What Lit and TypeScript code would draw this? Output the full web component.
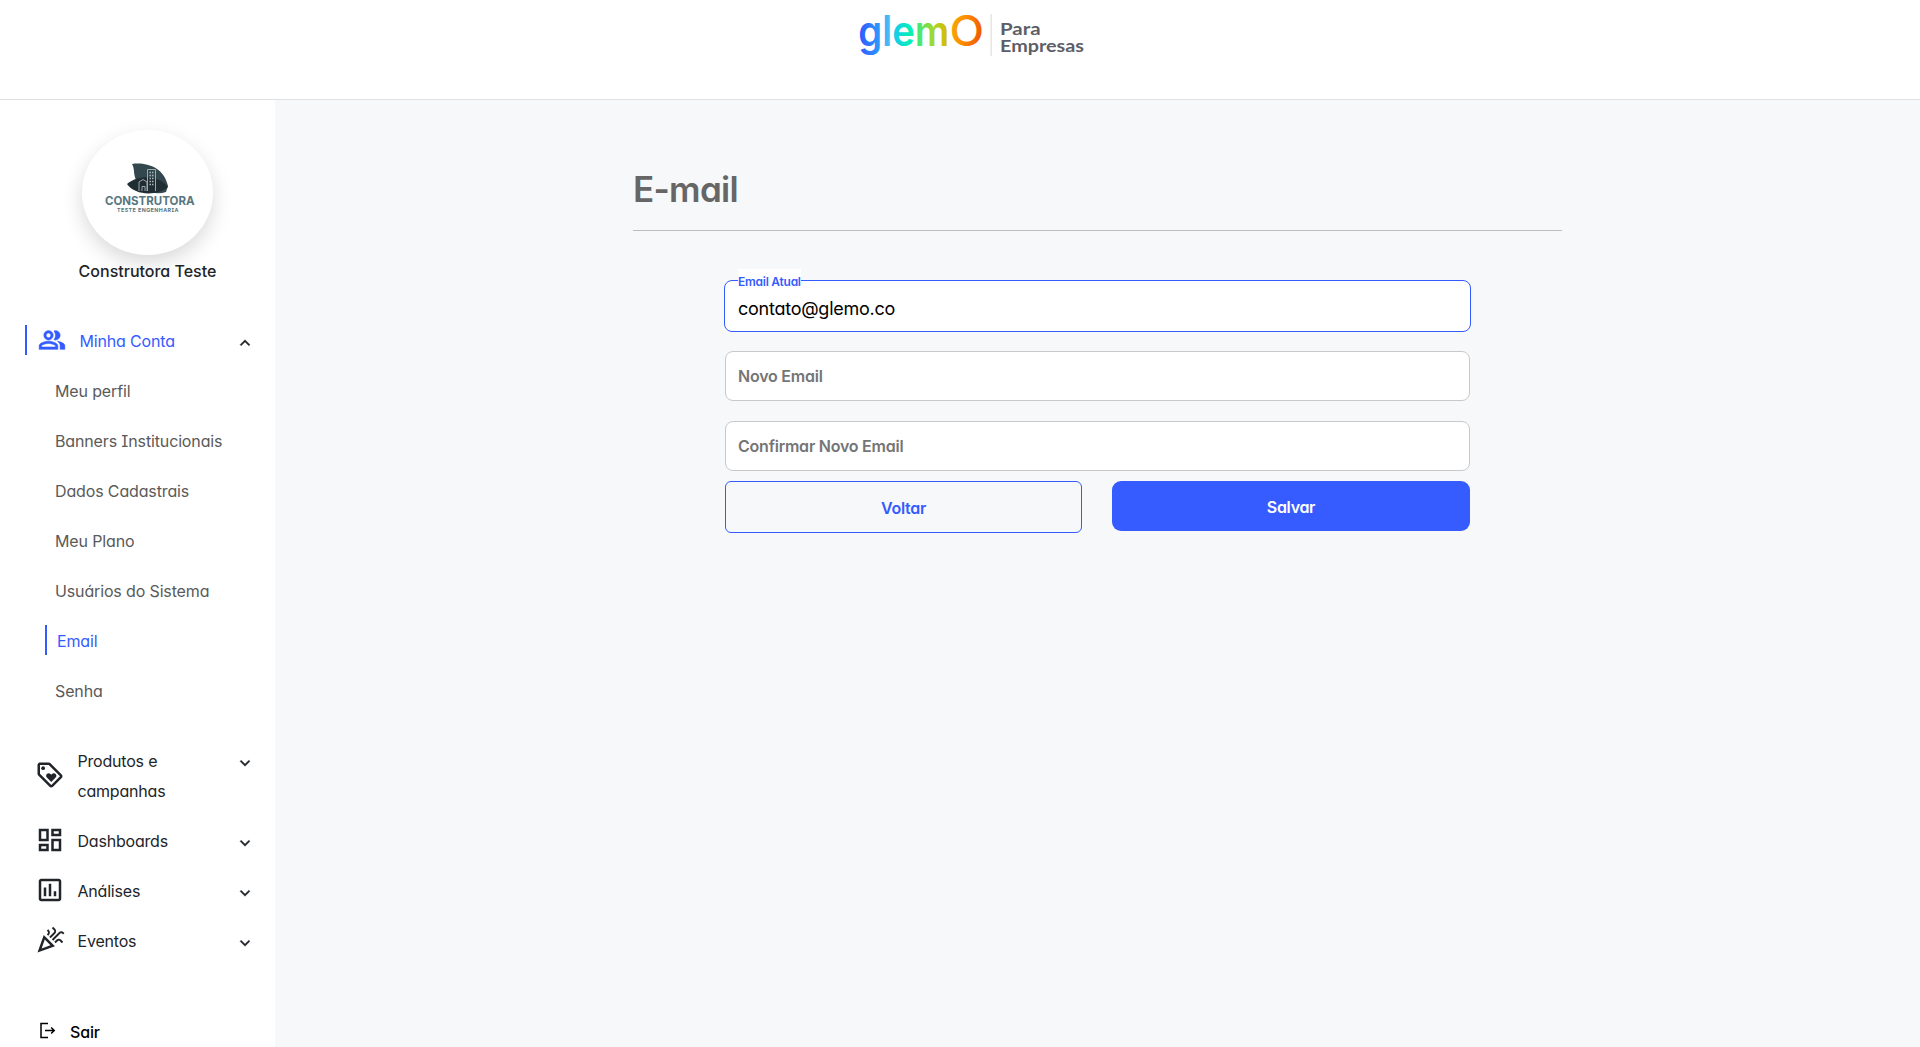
import { LitElement, html, css, svg } from "lit";
import { customElement, property } from "lit/decorators.js";
import { classMap } from "lit/directives/class-map.js";

const baseText = css`
  :host {
    box-sizing: border-box;
    font-family: Inter, "Liberation Sans", sans-serif;
    font-feature-settings: "cv11", "cv08";
    font-size: 16px;
  }
  * {
    box-sizing: border-box;
  }
  svg {
    display: block;
    flex: none;
  }
`;

const icons: Record<string, unknown> = {
  group: svg`<path stroke="currentColor" stroke-width=".5" d="M16.67 13.13C18.04 14.06 19 15.32 19 17v3h4v-3c0-2.18-3.57-3.47-6.33-3.87zM15 12c2.21 0 4-1.79 4-4s-1.79-4-4-4c-.47 0-.91.1-1.33.24C14.5 5.27 15 6.58 15 8s-.5 2.73-1.33 3.76c.42.14.86.24 1.33.24zM9 12c2.21 0 4-1.79 4-4s-1.79-4-4-4-4 1.79-4 4 1.79 4 4 4zm0-6c1.1 0 2 .9 2 2s-.9 2-2 2-2-.9-2-2 .9-2 2-2zM9 13c-2.67 0-8 1.34-8 4v3h16v-3c0-2.66-5.33-4-8-4zm6 5H3v-.99C3.2 16.29 6.3 15 9 15s5.8 1.29 6 2v1z"/>`,
  loyalty: svg`<path d="M21.41 11.58l-9-9C12.05 2.22 11.55 2 11 2H4c-1.1 0-2 .9-2 2v7c0 .55.22 1.05.59 1.42l9 9c.36.36.86.58 1.41.58s1.05-.22 1.41-.59l7-7c.37-.36.59-.86.59-1.41s-.23-1.06-.59-1.42zM13 20.01L4 11V4h7v-.01l9 9-7 7.02z"/><circle cx="6.5" cy="6.5" r="1.5"/><path d="M8.9 12.55c0 .57.23 1.07.6 1.45l3.5 3.5 3.5-3.5c.37-.37.6-.89.6-1.45 0-1.13-.92-2.05-2.05-2.05-.57 0-1.08.23-1.45.6l-.6.6-.6-.59c-.37-.38-.89-.61-1.45-.61-1.13 0-2.05.92-2.05 2.05z"/>`,
  dashboard: svg`<path d="M19 5v2h-4V5h4M9 5v6H5V5h4m10 8v6h-4v-6h4M9 17v2H5v-2h4M21 3h-8v6h8V3zM11 3H3v10h8V3zm10 8h-8v10h8V11zm-10 4H3v6h8v-6z"/>`,
  chart: svg`<path d="M9 17H7v-7h2v7zm4 0h-2V7h2v10zm4 0h-2v-4h2v4zm2 2H5V5h14v14zm0-16H5c-1.1 0-2 .9-2 2v14c0 1.1.9 2 2 2h14c1.1 0 2-.9 2-2V5c0-1.1-.9-2-2-2z"/>`,
  party: svg`<path d="M2 22l14-5-9-9L2 22zm10.35-5.82L5.3 18.7l2.52-7.05 4.53 4.53zM14.53 12.53l5.59-5.59c.49-.49 1.28-.49 1.77 0l.59.59 1.06-1.06-.59-.59c-1.07-1.07-2.82-1.07-3.89 0l-5.59 5.59 1.06 1.06zM10.06 6.88l-.59.59 1.06 1.06.59-.59c1.07-1.07 1.07-2.82 0-3.89l-.59-.59-1.06 1.07.59.59c.48.48.48 1.28 0 1.76zM17.06 11.88l-1.59 1.59 1.06 1.06 1.59-1.59c.49-.49 1.28-.49 1.77 0l1.61 1.61 1.06-1.06-1.61-1.61c-1.08-1.07-2.82-1.07-3.9 0zM15.06 5.88l-3.59 3.59 1.06 1.06 3.59-3.59c1.07-1.07 1.07-2.82 0-3.89l-1.59-1.59-1.06 1.06 1.59 1.59c.48.49.48 1.29 0 1.77z"/>`,
  more: svg`<path stroke="currentColor" stroke-width=".4" d="M16.59 8.59L12 13.17 7.41 8.59 6 10l6 6 6-6z"/>`,
  less: svg`<path stroke="currentColor" stroke-width=".4" d="M12 8l-6 6 1.41 1.41L12 10.83l4.59 4.58L18 14z"/>`,
};

const icon = (name: string, size: number) =>
  html`<svg width=${size} height=${size} viewBox="0 0 24 24" fill="currentColor">${icons[name]}</svg>`;

@customElement("brand-logo")
class BrandLogo extends LitElement {
  static styles = [
    baseText,
    css`
      :host {
        display: flex;
      }
      .word {
        font-size: 42.5px;
        font-weight: 600;
      }
      .ring {
        font-weight: 500;
      }
      .sub {
        font-family: Lato, sans-serif;
        font-size: 16.8px;
        font-weight: 700;
        fill: #5d5e67;
      }
    `,
  ];
  render() {
    return html`<svg width="230" height="60" viewBox="0 0 230 60">
      <defs>
        <linearGradient id="rainbow" gradientUnits="userSpaceOnUse" x1="2" y1="0" x2="124" y2="0">
          <stop offset="0" stop-color="#2f5bff" />
          <stop offset=".17" stop-color="#2e9dff" />
          <stop offset=".24" stop-color="#50bdf5" />
          <stop offset=".29" stop-color="#15cdea" />
          <stop offset=".42" stop-color="#05f3b0" />
          <stop offset=".47" stop-color="#3ee97c" />
          <stop offset=".6" stop-color="#a4d82a" />
          <stop offset=".72" stop-color="#dbb800" />
        </linearGradient>
        <linearGradient id="sunset" x1="0" y1="0" x2="1" y2=".25">
          <stop offset="0" stop-color="#f2b100" />
          <stop offset=".5" stop-color="#ff8e00" />
          <stop offset="1" stop-color="#f05a00" />
        </linearGradient>
      </defs>
      <text class="word" x="0.300" y="45.5" textLength="91" lengthAdjust="spacingAndGlyphs" fill="url(#rainbow)">glem</text>
      <text class="word ring" x="91.500" y="45.500" textLength="34.500" lengthAdjust="spacingAndGlyphs" fill="url(#sunset)">O</text>
      <rect x="132.5" y="14" width="1.5" height="42" fill="#e6e6e8" />
      <text class="sub">
        <tspan x="142" y="34.700" textLength="40.500" lengthAdjust="spacingAndGlyphs">Para</tspan><tspan x="142" y="51.500" textLength="84" lengthAdjust="spacingAndGlyphs">Empresas</tspan>
      </text>
    </svg>`;
  }
}

@customElement("company-card")
class CompanyCard extends LitElement {
  static styles = [
    baseText,
    css`
      :host {
        display: flex;
        flex-direction: column;
        align-items: center;
        width: 137px;
      }
      .avatar {
        width: 131px;
        height: 125px;
        border-radius: 50%;
        background: #fff;
        box-shadow: 0 8px 20px rgba(0, 0, 0, 0.15);
      }
      .name {
        padding-top: 1px;
        line-height: 30px;
        font-weight: 500;
        color: #212529;
        white-space: nowrap;
      }
      .mark {
        font-family: Inter, sans-serif;
        font-weight: 700;
        font-size: 12px;
        fill: #577681;
      }
      .small {
        font-size: 5.3px;
      }
    `,
  ];
  render() {
    return html`
      <div class="avatar">
        <svg width="131" height="125" viewBox="0 0 131 125">
          <path d="M50 34C64 32 82 37 86 56L84 62C72 66 58 60 54 50C51 43 53 39 50 34Z" fill="#33474f" />
          <path d="M45 54C55 45 76 44 86 57C76 66 53 66 45 54Z" fill="#202d33" />
          <g fill="none" stroke="#a9b4b7" stroke-width=".9">
            <path d="M65.5 61V39.5H73.5V61M57 61V52L61 49.5L65 52V61M60 61V56.5H63V61" />
            <path d="M67.5 42.5h4M67.5 45.5h4M67.5 48.5h4M67.5 51.5h4M67.5 54.5h4" stroke-dasharray="1.5 1" stroke-width="1.5" />
          </g>
          <text class="mark" x="23" y="74.5" textLength="89.500" lengthAdjust="spacingAndGlyphs">CONSTRUTORA</text>
          <text class="mark small" x="35" y="81.700" textLength="61.500">TESTE ENGENHARIA</text>
        </svg>
      </div>
      <div class="name">Construtora Teste</div>
    `;
  }
}

@customElement("nav-group")
class NavGroup extends LitElement {
  @property() label = "";
  @property() icon = "";
  @property({ type: Boolean }) open = false;
  static styles = [
    baseText,
    css`
      :host {
        display: block;
        color: #212529;
      }
      .row {
        display: flex;
        min-height: 30px;
        padding: 0 20px 0 35px;
      }
      .row.open {
        margin-left: 25px;
        padding-left: 11px;
        border-left: 2px solid #345bff;
      }
      .icon {
        display: flex;
        align-items: center;
        width: 42.5px;
      }
      .open .icon {
        width: 41.5px;
        color: #345bff;
      }
      .text {
        flex: 1;
        padding-right: 60px;
        margin-bottom: -1px;
        line-height: 30px;
        padding-top: 1px;
        letter-spacing: -0.2px;
      }
      .open .text {
        color: #345bff;
        padding-right: 0;
        letter-spacing: -0.17px;
      }
      .chevron {
        padding-top: 8px;
        height: 30px;
      }
    `,
  ];
  render() {
    return html`<div class=${classMap({ row: true, open: this.open })}>
      <div class="icon">${icon(this.icon, this.open ? 28 : 30)}</div>
      <div class="text">${this.label}</div>
      <div class="chevron">${icon(this.open ? "less" : "more", 20)}</div>
    </div>`;
  }
}

@customElement("side-bar")
class SideBar extends LitElement {
  static styles = [
    baseText,
    css`
      :host {
        display: flex;
        flex-direction: column;
        width: 275px;
        height: 100%;
        overflow: hidden;
        padding-top: 30px;
        background: #fff;
      }
      .company {
        padding-left: 79px;
        height: 195px;
      }
      .sub {
        display: flex;
        flex-direction: column;
        gap: 20px;
        padding: 20px 0 40px 45px;
      }
      .item {
        height: 30px;
        padding: 1px 0 0 10px;
        line-height: 30px;
        color: #5a5a5a;
        letter-spacing: -0.14px;
      }
      .item.active {
        color: #345bff;
        border-left: 2px solid #345bff;
      }
      .groups {
        display: flex;
        flex-direction: column;
        gap: 20px;
      }
      .exit {
        display: flex;
        gap: 14px;
        padding: 62px 0 0 39px;
        color: #000;
        line-height: 30px;
        font-weight: 500;
        letter-spacing: -0.15px;
      }
      .exit svg {
        margin-top: 5px;
      }
    `,
  ];
  private items = ["Meu perfil", "Banners Institucionais", "Dados Cadastrais", "Meu Plano", "Usuários do Sistema", "Email", "Senha"];
  render() {
    return html`
      <div class="company"><company-card></company-card></div>
      <nav-group label="Minha Conta" icon="group" open></nav-group>
      <div class="sub">
        ${this.items.map((t) => html`<div class=${classMap({ item: true, active: t === "Email" })}>${t}</div>`)}
      </div>
      <div class="groups">
        <nav-group label="Produtos e campanhas" icon="loyalty"></nav-group>
        <nav-group label="Dashboards" icon="dashboard"></nav-group>
        <nav-group label="Análises" icon="chart"></nav-group>
        <nav-group label="Eventos" icon="party"></nav-group>
      </div>
      <div class="exit">
        <svg width="17" height="17" viewBox="0 0 17 17" fill="none" stroke="#000" stroke-width="1.5">
          <path d="M9 1.5H2v14H9M6 8.500H15M12.200 5.500L15.200 8.500L12.200 11.500" />
        </svg>
        <div>Sair</div>
      </div>
    `;
  }
}

@customElement("email-form")
class EmailForm extends LitElement {
  static styles = [
    baseText,
    css`
      :host {
        display: block;
        width: 929px;
      }
      .title {
        margin: 0;
        height: 131px;
        padding-top: 67px;
        line-height: 44px;
        font-size: 35px;
        font-weight: 600;
        letter-spacing: -0.7px;
        color: #666;
        border-bottom: 1px solid #bcbdbf;
      }
      .fields {
        padding: 49px 92px 0 92px;
        display: flex;
        flex-direction: column;
      }
      .field {
        height: 50px;
        margin: 0 0 20px;
        padding: 1px 12px 0;
        line-height: 46px;
        background: #fff;
        border: 1px solid #c8c9cb;
        border-radius: 8px;
        font-weight: 600;
        letter-spacing: -0.23px;
        color: #757575;
      }
      .field.focused {
        position: relative;
        height: 52px;
        margin: 0 -1px 19px;
        padding: 5px 13px 0;
        border-color: #345bff;
        font-size: 18px;
        font-weight: 400;
        color: #000;
        letter-spacing: -0.25px;
      }
      .legend {
        position: absolute;
        left: 13px;
        top: -12px;
        height: 20px;
        padding-top: 5px;
        line-height: 15px;
        background: #fff;
        color: #345bff;
        font-size: 12px;
        font-weight: 600;
        letter-spacing: -0.25px;
        white-space: nowrap;
      }
      .last {
        margin-bottom: 10px;
      }
      .actions {
        display: grid;
        grid-template-columns: 357px 358px;
        justify-content: space-between;
        align-items: start;
      }
      .btn {
        display: flex;
        align-items: center;
        justify-content: center;
        font-weight: 600;
        letter-spacing: -0.3px;
      }
      .ghost {
        height: 52px;
        padding-top: 2px;
        border: 1px solid #345bff;
        border-radius: 6px;
        color: #345bff;
      }
      .solid {
        height: 50px;
        padding-top: 2px;
        border-radius: 9px;
        background: #365bff;
        color: #fff;
      }
    `,
  ];
  render() {
    return html`
      <h1 class="title">E-mail</h1>
      <div class="fields">
        <div class="field focused"><span class="legend">Email Atual</span><span class="value">contato@glemo.co</span></div>
        <div class="field">Novo Email</div>
        <div class="field last">Confirmar Novo Email</div>
        <div class="actions">
          <div class="btn ghost">Voltar</div>
          <div class="btn solid">Salvar</div>
        </div>
      </div>
    `;
  }
}

@customElement("app-root")
class AppRoot extends LitElement {
  static styles = [
    baseText,
    css`
      :host {
        display: grid;
        grid-template: 100px 1fr / 275px 1fr;
        height: 100vh;
        overflow: hidden;
        background: #f7f8fa;
      }
      .top {
        grid-column: 1 / 3;
        padding-left: 858px;
        background: #fff;
        border-bottom: 1px solid #e0e1e3;
      }
      .side {
        min-height: 0;
      }
      .main {
        display: flex;
        padding-left: 358px;
      }
    `,
  ];
  render() {
    return html`
      <header class="top"><brand-logo></brand-logo></header>
      <aside class="side"><side-bar></side-bar></aside>
      <main class="main"><email-form></email-form></main>
    `;
  }
}
